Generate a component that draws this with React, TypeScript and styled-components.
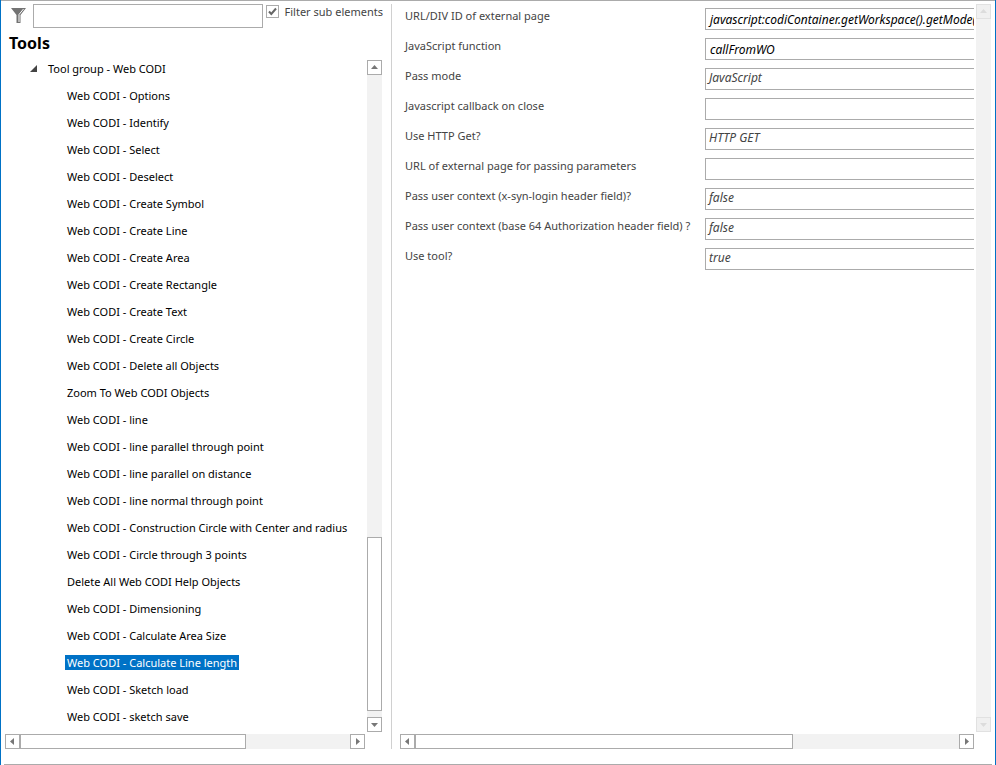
import React, { useState } from "react";
import styled, { createGlobalStyle } from "styled-components";

const GlobalStyle = createGlobalStyle`
  *, *::before, *::after { box-sizing: border-box; }
  body { margin: 0; background: #fff; }
  body, button, input, select { font-family: "Noto Sans", "Open Sans", sans-serif; font-size: 12px; }
`;

const line = "#ababab";
const accent = "#0072c6";

const Window = styled.div`
  display: flex;
  flex-direction: column;
  min-height: 100vh;
  border: solid ${accent};
  border-width: 0 1px;
  background: #fff;

  &::before {
    content: "";
    height: 1px;
    background: ${line};
  }
`;

const Panes = styled.main`
  flex: 1;
  display: grid;
  grid-template-columns: 391px minmax(0, 1fr);
  padding-top: 3px;
  padding-bottom: 15px;
`;

const BottomRule = styled.hr`
  width: auto;
  height: 1px;
  margin: 0 3px;
  border: 0;
  background: ${line};
`;

const ToolPane = styled.section`
  display: flex;
  flex-direction: column;
  min-width: 0;
  padding-left: 4px;
  border-right: 1px solid #d0d0d0;
`;

const FilterBar = styled.div`
  display: flex;
  align-items: flex-start;
  padding: 0 8px 0 5px;
`;

const FilterIcon = styled.svg`
  flex: none;
  width: 16px;
  height: 16px;
  margin: 4px 7px 0 0;
`;

const FilterInput = styled.input`
  flex: 1;
  min-width: 0;
  height: 24px;
  padding: 0 4px;
  border: 1px solid ${line};
`;

const CheckLabel = styled.label`
  display: flex;
  gap: 6px;
  margin-left: 3px;
  font-size: 11px;
  line-height: 15px;
  color: #444;
  white-space: nowrap;
`;

const CheckBox = styled.input`
  appearance: none;
  width: 13px;
  height: 13px;
  margin: 1px 0 0;
  border: 1px solid ${line};
  background: #fff center / 11px 11px no-repeat;

  &:checked {
    background-image: url("data:image/svg+xml,%3Csvg xmlns='http://www.w3.org/2000/svg' viewBox='0 0 11 11'%3E%3Cpath d='M2 5.5 4.3 8 9 2.5' fill='none' stroke='%23666' stroke-width='2'/%3E%3C/svg%3E");
  }
`;

const Heading = styled.h1`
  margin: 4px 0 0 4px;
  font-size: 16px;
  line-height: 22px;
  font-weight: 700;
  color: #000;
`;

const Viewport = styled.div`
  flex: 1;
  display: grid;
  grid-template-columns: minmax(0, 1fr) 15px;
  grid-template-rows: 1fr 15px;
  gap: 2px;
  min-width: 0;
`;

const ToolViewport = styled(Viewport)`
  padding-top: 1px;
  padding-right: 9px;
`;

const TreeList = styled.ul`
  margin: 0;
  padding: 0;
  list-style: none;
  overflow: hidden;
`;

const TreeItem = styled.li<{ $root?: boolean }>`
  display: flex;
  align-items: center;
  height: 27px;
  padding-left: ${(p) => (p.$root ? 25 : 60)}px;
`;

const Expander = styled.button`
  display: flex;
  width: 7px;
  height: 7px;
  margin-right: 9px;
  padding: 0;
  border: 0;
  background: none;
`;

const TreeLabel = styled.button<{ $selected?: boolean }>`
  height: 15px;
  padding: 0 2px;
  border: 0;
  font-size: 11px;
  line-height: 15px;
  white-space: nowrap;
  color: ${(p) => (p.$selected ? "#fff" : "#000")};
  background: ${(p) => (p.$selected ? accent : "transparent")};
`;

const Bar = styled.div<{ $vertical?: boolean; $offset?: boolean }>`
  display: flex;
  flex-direction: ${(p) => (p.$vertical ? "column" : "row")};
  min-width: 0;
  margin-top: ${(p) => (p.$offset ? 5 : 0)}px;
  background: #f2f2f2;
`;

const ArrowButton = styled.button`
  flex: none;
  display: grid;
  place-items: center;
  width: 15px;
  height: 15px;
  padding: 0;
  border: 1px solid ${line};
  background: #fff;
  color: #777;

  &:disabled {
    border-color: #e1e1e1;
    background: #f0f0f0;
    color: #dcdcdc;
  }
`;

const Space = styled.div<{ $grow: number }>`
  flex: ${(p) => p.$grow} 1 0;
`;

const Thumb = styled.div<{ $grow: number }>`
  flex: ${(p) => p.$grow} 1 0;
  border: 1px solid ${line};
  background: #fff;
`;

const PropertyPane = styled.section`
  display: flex;
  min-width: 0;
  padding: 0 4px 0 8px;
`;

const Form = styled.form`
  min-width: 0;
  padding: 4px 0 0 5px;
  overflow: hidden;
`;

const FormRow = styled.div`
  display: grid;
  grid-template-columns: 300px minmax(420px, 1fr);
  height: 30px;
`;

const FieldLabel = styled.label`
  font-size: 11px;
  line-height: 15px;
  color: #444;
  white-space: nowrap;
`;

const TextField = styled.input`
  height: 22px;
  padding: 0;
  text-indent: 4px;
  border: 1px solid ${line};
  border-radius: 0;
  background: #fff;
  font-style: italic;
  color: #000;
`;

const ChoiceField = styled.select`
  appearance: none;
  height: 22px;
  padding: 0 0 3px;
  text-indent: 3px;
  border: 1px solid ${line};
  border-radius: 0;
  background: #fff;
  font-style: italic;
  color: #444;
`;

type Direction = "up" | "down" | "left" | "right";

const arrows: Record<Direction, string> = {
  up: "M0 5 3.5 1 7 5z",
  down: "M0 2 7 2 3.5 6z",
  left: "M5 0 5 7 1 3.5z",
  right: "M2 0 6 3.5 2 7z",
};

function Arrow({ direction, disabled }: { direction: Direction; disabled?: boolean }) {
  return (
    <ArrowButton type="button" disabled={disabled} aria-label={`Scroll ${direction}`}>
      <svg width="7" height="7" viewBox="0 0 7 7" aria-hidden="true">
        <path d={arrows[direction]} fill="currentColor" />
      </svg>
    </ArrowButton>
  );
}

interface ScrollBarProps {
  vertical?: boolean;
  offset?: boolean;
  disabled?: boolean;
  before?: number;
  thumb?: number;
  after?: number;
}

function ScrollBar({ vertical, offset, disabled, before = 0, thumb = 0, after = 0 }: ScrollBarProps) {
  return (
    <Bar $vertical={vertical} $offset={offset}>
      <Arrow direction={vertical ? "up" : "left"} disabled={disabled} />
      {before > 0 && <Space $grow={before} />}
      {thumb > 0 && <Thumb $grow={thumb} />}
      <Space $grow={after} />
      <Arrow direction={vertical ? "down" : "right"} disabled={disabled} />
    </Bar>
  );
}

const tools = [
  "Web CODI - Options",
  "Web CODI - Identify",
  "Web CODI - Select",
  "Web CODI - Deselect",
  "Web CODI - Create Symbol",
  "Web CODI - Create Line",
  "Web CODI - Create Area",
  "Web CODI - Create Rectangle",
  "Web CODI - Create Text",
  "Web CODI - Create Circle",
  "Web CODI - Delete all Objects",
  "Zoom To Web CODI Objects",
  "Web CODI - line",
  "Web CODI - line parallel through point",
  "Web CODI - line parallel on distance",
  "Web CODI - line normal through point",
  "Web CODI - Construction Circle with Center and radius",
  "Web CODI - Circle through 3 points",
  "Delete All Web CODI Help Objects",
  "Web CODI - Dimensioning",
  "Web CODI - Calculate Area Size",
  "Web CODI - Calculate Line length",
  "Web CODI - Sketch load",
  "Web CODI - sketch save",
];

interface Property {
  id: string;
  label: string;
  value: string;
  options?: string[];
}

const properties: Property[] = [
  { id: "url", label: "URL/DIV ID of external page", value: "javascript:codiContainer.getWorkspace().getMode()" },
  { id: "function", label: "JavaScript function", value: "callFromWO" },
  { id: "mode", label: "Pass mode", value: "JavaScript", options: ["JavaScript"] },
  { id: "callback", label: "Javascript callback on close", value: "" },
  { id: "method", label: "Use HTTP Get?", value: "HTTP GET", options: ["HTTP GET"] },
  { id: "params", label: "URL of external page for passing parameters", value: "" },
  { id: "login", label: "Pass user context (x-syn-login header field)?", value: "false", options: ["false", "true"] },
  { id: "auth", label: "Pass user context (base 64 Authorization header field) ?", value: "false", options: ["false", "true"] },
  { id: "enabled", label: "Use tool?", value: "true", options: ["true", "false"] },
];

export default function App() {
  const [selected, setSelected] = useState("Web CODI - Calculate Line length");

  return (
    <>
      <GlobalStyle />
      <Window>
        <Panes>
          <ToolPane>
            <FilterBar>
              <FilterIcon viewBox="0 0 16 16" aria-hidden="true">
                <path d="M1 0H16L10.5 7V15H6.5V7z" fill="#737373" />
                <path d="M13.5 1 9 6.5V14" fill="none" stroke="#fff" strokeWidth="1" />
              </FilterIcon>
              <FilterInput type="text" aria-label="Filter" />
              <CheckLabel>
                <CheckBox type="checkbox" defaultChecked />
                Filter sub elements
              </CheckLabel>
            </FilterBar>
            <Heading>Tools</Heading>
            <ToolViewport>
              <TreeList>
                <TreeItem $root>
                  <Expander type="button" aria-label="Collapse" aria-expanded="true">
                    <svg width="7" height="7" viewBox="0 0 7 7" aria-hidden="true">
                      <path d="M7 0V7H0z" fill="#444" />
                    </svg>
                  </Expander>
                  <TreeLabel type="button">Tool group - Web CODI</TreeLabel>
                </TreeItem>
                {tools.map((tool) => (
                  <TreeItem key={tool}>
                    <TreeLabel type="button" $selected={tool === selected} onClick={() => setSelected(tool)}>
                      {tool}
                    </TreeLabel>
                  </TreeItem>
                ))}
              </TreeList>
              <ScrollBar vertical offset before={463} thumb={172} after={6} />
              <ScrollBar thumb={225} after={105} />
            </ToolViewport>
          </ToolPane>
          <PropertyPane>
            <Viewport>
              <Form>
                {properties.map((p) => (
                  <FormRow key={p.id}>
                    <FieldLabel htmlFor={p.id}>{p.label}</FieldLabel>
                    {p.options ? (
                      <ChoiceField id={p.id} defaultValue={p.value}>
                        {p.options.map((o) => (
                          <option key={o}>{o}</option>
                        ))}
                      </ChoiceField>
                    ) : (
                      <TextField id={p.id} type="text" defaultValue={p.value} />
                    )}
                  </FormRow>
                ))}
              </Form>
              <ScrollBar vertical disabled after={1} />
              <ScrollBar thumb={377} after={167} />
            </Viewport>
          </PropertyPane>
        </Panes>
        <BottomRule />
      </Window>
    </>
  );
}
